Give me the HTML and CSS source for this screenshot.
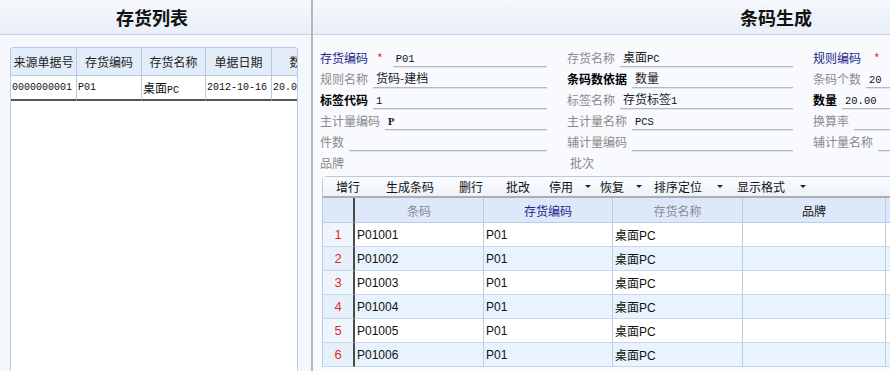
FILE: index.html
```html
<!DOCTYPE html>
<html lang="zh-CN">
<head>
  <meta charset="UTF-8">
  <title>条码生成</title>
  <link rel="stylesheet" href="styles.css">
</head>
<body>
  <div class="page">
    <div class="left">
      <div class="head head-left">存货列表</div>
      <div class="list">
        <table class="list-table">
          <colgroup>
            <col style="width:66px"><col style="width:65px"><col style="width:64px"><col style="width:66px"><col style="width:60px">
          </colgroup>
          <tr>
            <th>来源单据号</th><th>存货编码</th><th>存货名称</th><th>单据日期</th><th>数量</th>
          </tr>
          <tr>
            <td class="v">0000000001</td>
            <td class="v">P01</td>
            <td class="v"><span class="cn">桌面</span>PC</td>
            <td class="v">2012-10-16</td>
            <td class="v">20.00</td>
          </tr>
        </table>
      </div>
    </div>

    <div class="right">
      <div class="head head-right">条码生成</div>

      <div class="form">
        <div class="field"><span class="lbl req">存货编码</span><span class="star">*</span><span class="inp"><span class="v">P01</span></span></div>
        <div class="field"><span class="lbl">存货名称</span><span class="inp"><span class="cn">桌面</span><span class="v">PC</span></span></div>
        <div class="field"><span class="lbl req">规则编码</span><span class="star far">*</span><span class="inp"></span></div>

        <div class="field"><span class="lbl">规则名称</span><span class="inp"><span class="cn">货码-建档</span></span></div>
        <div class="field"><span class="lbl strong">条码数依据</span><span class="inp"><span class="cn">数量</span></span></div>
        <div class="field"><span class="lbl">条码个数</span><span class="inp"><span class="v">20</span></span></div>

        <div class="field"><span class="lbl strong">标签代码</span><span class="inp"><span class="v">1</span></span></div>
        <div class="field"><span class="lbl">标签名称</span><span class="inp"><span class="cn">存货标签</span><span class="v">1</span></span></div>
        <div class="field"><span class="lbl strong">数量</span><span class="inp"><span class="v">20.00</span></span></div>

        <div class="field"><span class="lbl">主计量编码</span><span class="inp"><span class="v b">P</span></span></div>
        <div class="field"><span class="lbl">主计量名称</span><span class="inp"><span class="v">PCS</span></span></div>
        <div class="field"><span class="lbl">换算率</span><span class="inp"></span></div>

        <div class="field"><span class="lbl">件数</span><span class="inp"></span></div>
        <div class="field"><span class="lbl">辅计量编码</span><span class="inp"></span></div>
        <div class="field"><span class="lbl">辅计量名称</span><span class="inp"></span></div>

        <div class="field"><span class="lbl">品牌</span></div>
        <div class="field"><span class="lbl lot">批次</span></div>
      </div>

      <div class="grid-box">
        <div class="toolbar">
          <span class="btn">增行</span>
          <span class="btn">生成条码</span>
          <span class="btn">删行</span>
          <span class="btn">批改</span>
          <span class="btn">停用<i class="caret"></i></span>
          <span class="btn">恢复<i class="caret"></i></span>
          <span class="btn">排序定位<i class="caret wide"></i></span>
          <span class="btn">显示格式<i class="caret wide"></i></span>
        </div>
        <table class="grid">
          <colgroup>
            <col style="width:32px"><col style="width:129px"><col style="width:129px"><col style="width:130px"><col style="width:143px"><col style="width:80px">
          </colgroup>
          <tr class="grid-head">
            <th class="num"></th>
            <th class="dim">条码</th>
            <th class="navy">存货编码</th>
            <th class="dim">存货名称</th>
            <th>品牌</th>
            <th></th>
          </tr>
          <tr><td class="num">1</td><td>P01001</td><td>P01</td><td>桌面PC</td><td></td><td></td></tr>
          <tr><td class="num">2</td><td>P01002</td><td>P01</td><td>桌面PC</td><td></td><td></td></tr>
          <tr><td class="num">3</td><td>P01003</td><td>P01</td><td>桌面PC</td><td></td><td></td></tr>
          <tr><td class="num">4</td><td>P01004</td><td>P01</td><td>桌面PC</td><td></td><td></td></tr>
          <tr><td class="num">5</td><td>P01005</td><td>P01</td><td>桌面PC</td><td></td><td></td></tr>
          <tr><td class="num">6</td><td>P01006</td><td>P01</td><td>桌面PC</td><td></td><td></td></tr>
        </table>
      </div>
    </div>
  </div>
</body>
</html>
```

FILE: styles.css
```css
html, body {
  margin: 0;
  padding: 0;
}
body {
  font-family: "Noto Sans CJK SC", "Liberation Sans", sans-serif;
  font-size: 12px;
  color: #222;
  background: #fff;
}
.page {
  display: flex;
  width: 890px;
  height: 371px;
  overflow: hidden;
}
.head {
  height: 34px;
  line-height: 34px;
  font-size: 18px;
  font-weight: bold;
  color: #111;
  background: linear-gradient(#f5f8fc, #e9eff8);
  border-bottom: 1px solid #c6d3e4;
}
.head-left {
  padding-left: 116px;
}
.head-right {
  padding-left: 427px;
}

/* left panel */
.left {
  width: 311px;
  flex: none;
  display: flex;
  flex-direction: column;
  background: #f4f7fc;
  border-right: 2px solid #b3b8c0;
}
.list {
  flex: 1;
  margin: 12px 0 0 10px;
  width: 286px;
  background: #fff;
  border: 1px solid #b3cbe8;
  border-bottom: none;
  border-radius: 4px 4px 0 0;
  overflow: hidden;
}
.list-table {
  table-layout: fixed;
  width: 321px;
  border-collapse: separate;
  border-spacing: 0;
}
.list-table th {
  height: 27px;
  padding: 0;
  font-weight: normal;
  background: #e3edfa;
  border-right: 1px solid #b5cbe5;
  border-bottom: 1px solid #b5cbe5;
  white-space: nowrap;
  overflow: hidden;
}
.list-table td {
  height: 23px;
  padding: 0 0 0 1px;
  border-right: 1px solid #b5cbe5;
  border-bottom: 2px solid #555;
  white-space: nowrap;
  overflow: hidden;
}
.list-table .v {
  font-size: 10px;
}
.v {
  font-family: "Liberation Mono", monospace;
  font-size: 10.5px;
  color: #111;
}
.v.b {
  font-family: "Liberation Serif", serif;
  font-weight: bold;
}
.cn {
  font-family: "Noto Sans CJK SC", sans-serif;
  font-size: 12px;
}

/* right panel */
.right {
  flex: 1;
  min-width: 0;
  background: #f8fafd;
  overflow: hidden;
}
.form {
  display: grid;
  grid-template-columns: 247px 246px 260px;
  grid-auto-rows: 21px;
  padding: 12px 0 0 7px;
  width: 800px;
}
.field {
  display: flex;
  align-items: flex-start;
  padding-right: 20px;
  line-height: 21px;
  white-space: nowrap;
}
.lbl {
  color: #8a8a8a;
}
.lbl.req {
  color: #23238c;
}
.lbl.strong {
  color: #000;
  font-weight: bold;
}
.lbl.lot {
  padding-left: 3px;
}
.star {
  color: #e53030;
  margin: 0 5px 0 9px;
  font-size: 12px;
}
.star.far {
  margin-left: 13px;
}
.inp {
  flex: 1;
  height: 19px;
  line-height: 19px;
  margin-left: 5px;
  padding-left: 3px;
  border-bottom: 1px solid #b4bac3;
  box-shadow: 0 1px 0 #e2e6ec;
}

/* grid */
.grid-box {
  margin: 3px 0 0 9px;
  width: 700px;
  border-left: 1px solid #b7cbe5;
  border-top: 1px solid #b7cbe5;
  border-top-left-radius: 5px;
  background: #fff;
}
.toolbar {
  display: flex;
  height: 19px;
  line-height: 19px;
  background: linear-gradient(#fbfcfe, #eef3f9);
  border-bottom: 2px solid #a9aeb5;
  color: #111;
}
.btn {
  display: flex;
  align-items: center;
}
.btn:nth-child(1) { padding-left: 13px; }
.btn:nth-child(2) { padding-left: 26px; }
.btn:nth-child(3) { padding-left: 25px; }
.btn:nth-child(4) { padding-left: 23px; }
.btn:nth-child(5) { padding-left: 19px; }
.btn:nth-child(6) { padding-left: 9px; }
.btn:nth-child(7) { padding-left: 12px; }
.btn:nth-child(8) { padding-left: 14px; }
.caret {
  display: inline-block;
  margin-left: 12px;
  width: 0;
  height: 0;
  border-left: 3px solid transparent;
  border-right: 3px solid transparent;
  border-top: 3px solid #222;
}
.caret.wide {
  margin-left: 15px;
}
.grid {
  table-layout: fixed;
  width: 643px;
  border-collapse: separate;
  border-spacing: 0;
  font-family: "Liberation Sans", "Noto Sans CJK SC", sans-serif;
  font-size: 12px;
}
.grid th {
  height: 24px;
  padding: 0;
  font-family: "Noto Sans CJK SC", sans-serif;
  font-weight: normal;
  color: #111;
  background: #dde9fa;
  border-right: 1px solid #b9cde6;
  border-bottom: 1px solid #b9cde6;
}
.grid th.dim {
  color: #8a8a8a;
}
.grid th.navy {
  color: #23238c;
}
.grid td {
  height: 23px;
  padding: 0 0 0 2px;
  color: #111;
  border-right: 1px solid #b9cde6;
  border-bottom: 1px solid #c5d6ea;
  white-space: nowrap;
}
.grid tr:nth-child(odd) td {
  background: #e8f3fe;
}
.grid .num {
  padding: 0;
  text-align: center;
  color: #e8262a;
  font-size: 13px;
  border-right: 2px solid #4a4a4a;
}
.grid td.num {
  background: #eef5fd;
}
.grid tr:nth-child(odd) td.num {
  background: #e6f0fb;
}
```
